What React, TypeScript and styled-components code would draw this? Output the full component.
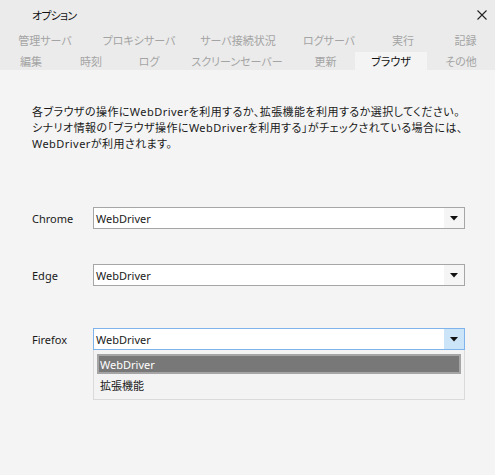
import React from 'react';
import styled, { createGlobalStyle } from 'styled-components';

const GlobalStyle = createGlobalStyle`
  html, body {
    margin: 0;
    padding: 0;
    background: #f4f4f4;
  }
  body {
    font-family: "Noto Sans", "Noto Sans CJK JP", sans-serif;
    font-size: 11px;
    font-feature-settings: "palt";
    color: #1a1a1a;
  }
`;

const Window = styled.div`
  width: 495px;
  height: 475px;
  display: flex;
  flex-direction: column;
  overflow: hidden;
`;

const TitleBar = styled.div`
  height: 29px;
  background: #ebebeb;
  display: flex;
  align-items: center;
  justify-content: space-between;
  padding: 0 3px 0 32px;
  color: #111;
`;

const Title = styled.span`
  letter-spacing: -0.8px;
`;

const CloseButton = styled.button`
  border: 0;
  background: transparent;
  width: 20px;
  height: 22px;
  padding: 0;
  display: flex;
  align-items: center;
  justify-content: center;
`;

const TabStrip = styled.div`
  background: #ebebeb;
  padding-top: 2px;
  display: flex;
  flex-direction: column;
  gap: 3px;
`;

const TabRow = styled.div`
  display: flex;
  height: 18px;
`;

const Tab = styled.div<{ $w: number; $active?: boolean }>`
  width: ${p => p.$w}px;
  flex: none;
  display: flex;
  align-items: center;
  justify-content: center;
  white-space: nowrap;
  color: ${p => (p.$active ? '#111' : '#a4a4a4')};
  background: ${p => (p.$active ? '#f4f4f4' : 'transparent')};
`;

const Content = styled.div`
  flex: 1;
  background: #f4f4f4;
  padding: 34px 20px 0 32px;
`;

const Description = styled.p`
  margin: 0 0 55px;
  line-height: 16px;
  letter-spacing: 0.45px;
  white-space: nowrap;
`;

const Field = styled.div<{ $top: number }>`
  display: flex;
  align-items: center;
  margin-top: ${p => p.$top}px;
  position: relative;
`;

const Label = styled.div`
  width: 61px;
  flex: none;
`;

const Select = styled.div<{ $focused?: boolean }>`
  width: 372px;
  height: 22px;
  box-sizing: border-box;
  border: 1px solid ${p => (p.$focused ? '#7eb4ea' : '#a6a6a6')};
  background: #fff;
  display: flex;
  align-items: center;
`;

const Value = styled.div`
  flex: 1;
  padding-left: 2px;
`;

const ArrowBox = styled.div<{ $focused?: boolean }>`
  width: 20px;
  height: 100%;
  background: ${p => (p.$focused ? '#cce4f7' : '#f5f5f5')};
  display: flex;
  align-items: center;
  justify-content: center;
`;

const DropList = styled.div`
  position: absolute;
  left: 61px;
  top: 22px;
  width: 372px;
  height: 50px;
  box-sizing: border-box;
  border: 1px solid #dadada;
  border-top: 0;
  background: #f3f3f3;
  padding: 4px 3px 0 3px;
`;

const Option = styled.div<{ $selected?: boolean }>`
  height: 20px;
  box-sizing: border-box;
  display: flex;
  align-items: center;
  color: ${p => (p.$selected ? '#fff' : '#1a1a1a')};
  background: ${p => (p.$selected ? '#787878' : 'transparent')};
  border: ${p => (p.$selected ? '2px solid #a5a5a5' : '0')};
  margin-bottom: 1px;
  padding-left: ${p => (p.$selected ? '1px' : '3px')};
`;

const row1 = [
  { label: '管理サーバ', w: 90 },
  { label: 'プロキシサーバ', w: 98 },
  { label: 'サーバ接続状況', w: 100 },
  { label: 'ログサーバ', w: 82 },
  { label: '実行', w: 66 },
  { label: '記録', w: 59 },
];

const row2 = [
  { label: '編集', w: 62 },
  { label: '時刻', w: 58 },
  { label: 'ログ', w: 58 },
  { label: 'スクリーンセーバー', w: 118 },
  { label: '更新', w: 59 },
  { label: 'ブラウザ', w: 72, active: true },
  { label: 'その他', w: 68 },
];

const Arrow = () => (
  <svg width="8" height="5" viewBox="0 0 8 5">
    <path d="M0 0 H8 L4 4.5 Z" fill="#111" />
  </svg>
);

const Dropdown = ({ value, focused }: { value: string; focused?: boolean }) => (
  <Select $focused={focused}>
    <Value>{value}</Value>
    <ArrowBox $focused={focused}>
      <Arrow />
    </ArrowBox>
  </Select>
);

export default function App() {
  return (
    <Window>
      <GlobalStyle />
      <TitleBar>
        <Title>オプション</Title>
        <CloseButton>
          <svg width="10" height="10" viewBox="0 0 10 10">
            <path d="M0.5 0.5 L9.5 9.5 M9.5 0.5 L0.5 9.5" stroke="#222" strokeWidth="1.1" />
          </svg>
        </CloseButton>
      </TitleBar>
      <TabStrip>
        <TabRow>
          {row1.map(t => (
            <Tab key={t.label} $w={t.w}>{t.label}</Tab>
          ))}
        </TabRow>
        <TabRow>
          {row2.map(t => (
            <Tab key={t.label} $w={t.w} $active={t.active}>{t.label}</Tab>
          ))}
        </TabRow>
      </TabStrip>
      <Content>
        <Description>
          各ブラウザの操作にWebDriverを利用するか、拡張機能を利用するか選択してください。
          <br />
          シナリオ情報の「ブラウザ操作にWebDriverを利用する」がチェックされている場合には、
          <br />
          WebDriverが利用されます。
        </Description>
        <Field $top={0}>
          <Label>Chrome</Label>
          <Dropdown value="WebDriver" />
        </Field>
        <Field $top={35}>
          <Label>Edge</Label>
          <Dropdown value="WebDriver" />
        </Field>
        <Field $top={42}>
          <Label>Firefox</Label>
          <Dropdown value="WebDriver" focused />
          <DropList>
            <Option $selected>WebDriver</Option>
            <Option>拡張機能</Option>
          </DropList>
        </Field>
      </Content>
    </Window>
  );
}
